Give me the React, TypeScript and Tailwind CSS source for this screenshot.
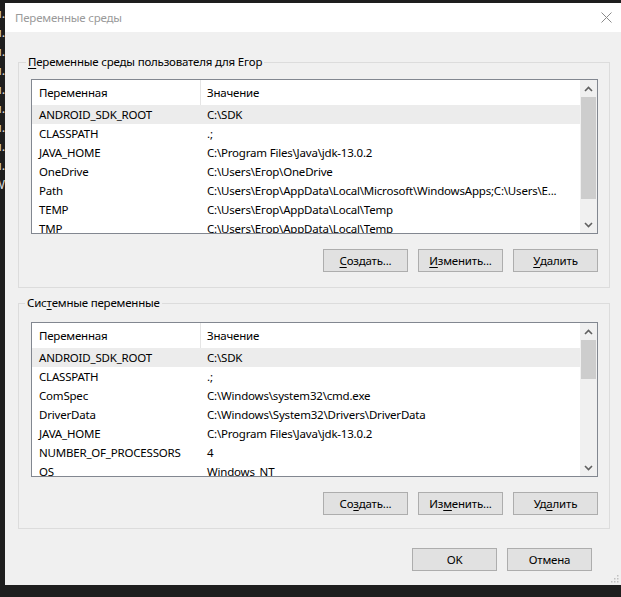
import React from "react";

const FONT = "font-['Noto_Sans',sans-serif]";

type Row = [string, string];

const userRows: Row[] = [
  ["ANDROID_SDK_ROOT", "C:\\SDK"],
  ["CLASSPATH", ".;"],
  ["JAVA_HOME", "C:\\Program Files\\Java\\jdk-13.0.2"],
  ["OneDrive", "C:\\Users\\Егор\\OneDrive"],
  ["Path", "C:\\Users\\Егор\\AppData\\Local\\Microsoft\\WindowsApps;C:\\Users\\Е..."],
  ["TEMP", "C:\\Users\\Егор\\AppData\\Local\\Temp"],
  ["TMP", "C:\\Users\\Егор\\AppData\\Local\\Temp"],
];

const sysRows: Row[] = [
  ["ANDROID_SDK_ROOT", "C:\\SDK"],
  ["CLASSPATH", ".;"],
  ["ComSpec", "C:\\Windows\\system32\\cmd.exe"],
  ["DriverData", "C:\\Windows\\System32\\Drivers\\DriverData"],
  ["JAVA_HOME", "C:\\Program Files\\Java\\jdk-13.0.2"],
  ["NUMBER_OF_PROCESSORS", "4"],
  ["OS", "Windows_NT"],
];

function Chevron({ up }: { up?: boolean }) {
  return (
    <svg width="9" height="6" viewBox="0 0 9 6">
      <polyline
        points={up ? "1,5 4.5,1.5 8,5" : "1,1 4.5,4.5 8,1"}
        fill="none"
        stroke="#606060"
        strokeWidth="1.6"
      />
    </svg>
  );
}

function ListView({ rows, thumb }: { rows: Row[]; thumb: number }) {
  return (
    <div className="h-[155px] w-full min-w-0 border border-[#828790] bg-white flex overflow-hidden">
      <div className="flex-1 min-w-0 flex flex-col overflow-hidden">
        <div className="h-[25px] shrink-0 flex">
          <div className="w-[169px] shrink-0 h-full pl-[7px] flex items-center border-r border-[#e5e5e5]">
            Переменная
          </div>
          <div className="pl-[6px] flex items-center">Значение</div>
        </div>
        {rows.map((r, i) => (
          <div
            key={i}
            className={
              i === 0
                ? "h-[19px] shrink-0 flex items-center bg-[#ececec]"
                : "h-[19px] shrink-0 flex items-center"
            }
          >
            <div className="w-[169px] shrink-0 pl-[7px] whitespace-nowrap">{r[0]}</div>
            <div className="pl-[6px] whitespace-nowrap">{r[1]}</div>
          </div>
        ))}
      </div>
      <div className="w-[17px] shrink-0 bg-[#f0f0f0] flex flex-col">
        <div className="h-[17px] shrink-0 flex items-center justify-center">
          <Chevron up />
        </div>
        <div className="flex-1 px-[1px]">
          <div className="bg-[#cdcdcd] w-full" style={{ height: thumb }} />
        </div>
        <div className="h-[17px] shrink-0 flex items-center justify-center">
          <Chevron />
        </div>
      </div>
    </div>
  );
}

function Btn({ children }: { children: React.ReactNode }) {
  return (
    <div className="w-[85px] h-[23px] bg-[#e1e1e1] border border-[#adadad] flex items-center justify-center text-black">
      {children}
    </div>
  );
}

function U({ children }: { children: React.ReactNode }) {
  return <span className="underline underline-offset-[2px] decoration-[1px]">{children}</span>;
}

export default function App() {
  return (
    <div className={`${FONT} text-[11.5px] tracking-[-0.2px] leading-[16px] text-black w-[621px] h-[597px] bg-[#1e1e1e] flex flex-col overflow-hidden`}>
      <div className="h-[3px] shrink-0" />
      <div className="flex h-[582px] shrink-0">
        <div className="w-[5px] shrink-0 overflow-hidden flex flex-col pt-[1px] text-[#d8d8d8] text-[13px] leading-[19px]">
          {["й.", "й.", "й.", "й.", "й.", "й.", "й.", "й.", "й.", "W"].map((t, i) => (
            <div key={i} className="flex justify-end whitespace-nowrap">
              {t}
            </div>
          ))}
        </div>
        <div className="flex-1 flex flex-col">
          <div className="h-[29px] shrink-0 bg-white flex items-center justify-between pl-[10px] pr-[9px]">
            <span className="text-[#9a9a9a]">Переменные среды</span>
            <svg width="11" height="11" viewBox="0 0 11 11">
              <path d="M0.5 0.5 L10.5 10.5 M10.5 0.5 L0.5 10.5" stroke="#8a8a8a" strokeWidth="1" />
            </svg>
          </div>
          <div className="h-[553px] bg-[#f0f0f0] pl-[13px] flex flex-col relative">
            <fieldset className="mt-[22px] w-[592px] min-w-0 border border-[#dcdcdc] pl-[12px] pr-[11px] pt-[9px] pb-[15px]">
              <legend className="ml-[-5px] px-[2px] leading-[16px]">
                <U>П</U>еременные среды пользователя для Егор
              </legend>
              <ListView rows={userRows} thumb={102} />
              <div className="mt-[15px] flex justify-end gap-[10px]">
                <Btn>
                  <U>С</U>оздать...
                </Btn>
                <Btn>
                  <U>И</U>зменить...
                </Btn>
                <Btn>
                  <U>У</U>далить
                </Btn>
              </div>
            </fieldset>
            <fieldset className="mt-[7px] w-[592px] min-w-0 border border-[#dcdcdc] pl-[12px] pr-[11px] pt-[11px] pb-[13px]">
              <legend className="ml-[-6px] px-[2px] leading-[16px]">
                Сис<U>т</U>емные переменные
              </legend>
              <ListView rows={sysRows} thumb={39} />
              <div className="mt-[15px] flex justify-end gap-[10px]">
                <Btn>
                  Со<U>з</U>дать...
                </Btn>
                <Btn>
                  Из<U>м</U>енить...
                </Btn>
                <Btn>
                  Уд<U>а</U>лить
                </Btn>
              </div>
            </fieldset>
            <div className="mt-[19px] flex justify-end gap-[10px] pr-[29px]">
              <Btn>OK</Btn>
              <Btn>Отмена</Btn>
            </div>
            <svg className="absolute right-[2px] bottom-[2px]" width="8" height="8" viewBox="0 0 8 8">
              <rect x="6" y="0" width="1.5" height="1.5" fill="#c0c0c0" />
              <rect x="3" y="3" width="1.5" height="1.5" fill="#c0c0c0" />
              <rect x="6" y="3" width="1.5" height="1.5" fill="#c0c0c0" />
              <rect x="0" y="6" width="1.5" height="1.5" fill="#c0c0c0" />
              <rect x="3" y="6" width="1.5" height="1.5" fill="#c0c0c0" />
              <rect x="6" y="6" width="1.5" height="1.5" fill="#c0c0c0" />
            </svg>
          </div>
        </div>
      </div>
      <div className="flex-1" />
    </div>
  );
}
